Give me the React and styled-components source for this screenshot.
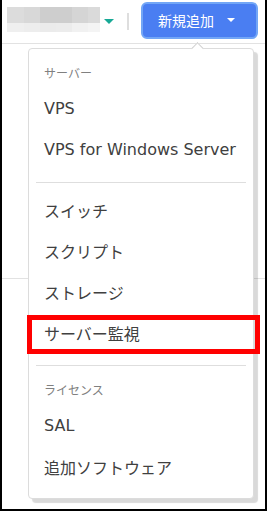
import React from 'react'
import styled, {createGlobalStyle} from 'styled-components'

const GlobalStyle = createGlobalStyle`
  html, body {
    margin: 0;
    padding: 0;
    background: #fff;
  }
  body {
    font-family: "DejaVu Sans", "Noto Sans CJK JP", sans-serif;
    color: #333;
  }
`

const mosaic = {
  top: ['#dcdcdc', '#d8d8d8', '#cecece', '#cecece', '#d5d5d5', '#dadada'],
  bottom: ['#efefef', '#ededed', '#ebebeb', '#ececec', '#f1f1f1', '#f4f4f4'],
  widths: [17, 16, 16, 16, 16, 12],
}

const groups = [
  {title: 'サーバー', items: ['VPS', 'VPS for Windows Server']},
  {title: null, items: ['スイッチ', 'スクリプト', 'ストレージ', 'サーバー監視']},
  {title: 'ライセンス', items: ['SAL', '追加ソフトウェア']},
]

function App() {
  return (
    <>
      <GlobalStyle />
      <Frame>
        <Header>
          <Mosaic>
            {mosaic.top.map((c, i) => (
              <MosaicCell key={'t' + i} color={c} />
            ))}
            {mosaic.bottom.map((c, i) => (
              <MosaicCell key={'b' + i} color={c} />
            ))}
          </Mosaic>
          <TealCaret />
          <Divider />
          <AddButton>
            新規追加
            <WhiteCaret />
          </AddButton>
        </Header>
        <Content>
          <TableRow />
        </Content>

        <Menu>
          <MenuArrow />
          {groups.map((group, gi) => (
            <React.Fragment key={gi}>
              {gi > 0 && <Separator />}
              {group.title && <GroupTitle>{group.title}</GroupTitle>}
              {group.items.map((item) => (
                <MenuItem key={item}>{item}</MenuItem>
              ))}
            </React.Fragment>
          ))}
        </Menu>
        <Highlight />
      </Frame>
    </>
  )
}

export default App

const Frame = styled.div`
  position: relative;
  width: 267px;
  height: 511px;
  box-sizing: border-box;
  border-left: 2px solid #000;
  border-right: 2px solid #000;
  border-bottom: 2px solid #000;
  overflow: hidden;
`

const Header = styled.div`
  display: flex;
  align-items: center;
  height: 44px;
  box-sizing: border-box;
  padding: 0 0 3px 5px;
  border-bottom: 1px solid #e2e2e2;
`

const Mosaic = styled.div`
  display: grid;
  grid-template-columns: ${mosaic.widths.map((w) => w + 'px').join(' ')};
  grid-template-rows: 16px 9px;
  margin-top: -1px;
`

const MosaicCell = styled.div`
  background: ${(p) => p.color};
`

const TealCaret = styled.div`
  width: 0;
  height: 0;
  margin-left: 4px;
  margin-top: 2px;
  border-left: 5px solid transparent;
  border-right: 5px solid transparent;
  border-top: 5px solid #17a996;
`

const Divider = styled.div`
  width: 2px;
  height: 17px;
  margin: 3px 0 0 13px;
  background: #dedede;
`

const AddButton = styled.button`
  display: flex;
  align-items: center;
  height: 37px;
  width: 117px;
  box-sizing: border-box;
  margin-left: 12px;
  padding: 0 0 0 15px;
  border: 2px solid #72a6f6;
  border-radius: 6px;
  background: #4a7ef2;
  color: #fff;
  font-family: "Noto Sans CJK JP", sans-serif;
  font-size: 14px;
  line-height: 20px;
  cursor: pointer;
`

const WhiteCaret = styled.span`
  width: 0;
  height: 0;
  margin-left: 13px;
  border-left: 4px solid transparent;
  border-right: 4px solid transparent;
  border-top: 4px solid #fff;
`

const Content = styled.div`
  display: flex;
  flex-direction: column;
`

const TableRow = styled.div`
  height: 234px;
  border-bottom: 1px solid #e2e2e2;
`

const Menu = styled.div`
  position: absolute;
  left: 26px;
  top: 48px;
  width: 226px;
  height: 451px;
  box-sizing: border-box;
  padding-top: 6px;
  background: #fff;
  border: 1px solid #dcdcdc;
  border-radius: 4px;
  box-shadow: 4px 4px 1px rgba(0, 0, 0, 0.15);
`

const MenuArrow = styled.div`
  position: absolute;
  top: -5px;
  left: 164px;
  width: 8px;
  height: 8px;
  background: #fff;
  border-top: 1px solid #cfcfcf;
  border-left: 1px solid #cfcfcf;
  transform: rotate(45deg);
`

const GroupTitle = styled.div`
  padding: 8px 15px 5px;
  font-family: "Noto Sans CJK JP", sans-serif;
  font-size: 12px;
  line-height: 20px;
  color: #808080;
`

const MenuItem = styled.div`
  display: flex;
  align-items: center;
  height: 41px;
  padding: 0 15px;
  font-size: 16px;
  color: #404040;
  white-space: nowrap;
`

const Separator = styled.div`
  height: 1px;
  margin: 12px 7px 6px;
  background: #dedede;
`

const Highlight = styled.div`
  position: absolute;
  left: 25px;
  top: 315px;
  width: 233px;
  height: 39px;
  box-sizing: border-box;
  border: 5px solid #ff0000;
`
